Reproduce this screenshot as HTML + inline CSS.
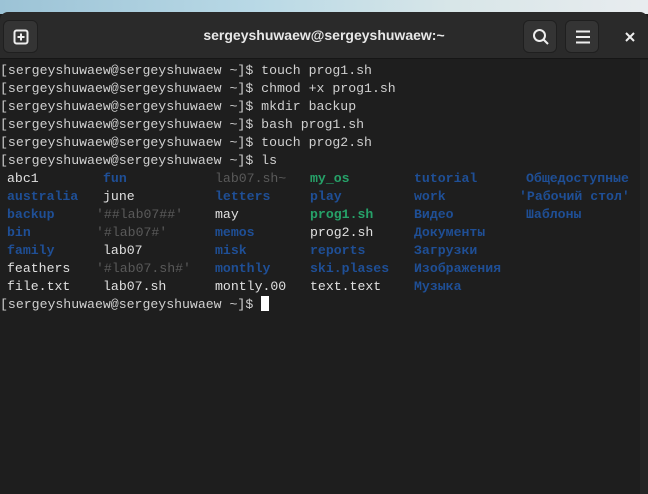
<!DOCTYPE html>
<html><head><meta charset="utf-8"><style>
*{margin:0;padding:0;box-sizing:border-box}
html,body{width:648px;height:494px;overflow:hidden}
body{background:#1e1e1e;position:relative;font-family:"Liberation Mono","DejaVu Sans Mono",monospace}
.desk{position:absolute;left:0;top:0;width:648px;height:14px;background:linear-gradient(90deg,#9cc3d6,#b9d9e6 40%,#d8e6e8 70%,#e8ecef)}
.hdr{position:absolute;left:0;top:12px;width:648px;height:47px;background:#2a2a2a;border-radius:8px 8px 0 0;border-bottom:1px solid #161616}
.btn{position:absolute;top:8px;height:33px;background:#343434;border-radius:6px;border:1px solid #1f1f1f}
.title{position:absolute;left:0;right:0;top:15px;text-align:center;color:#e8e8e8;font:bold 14px "Liberation Sans",sans-serif}
.term{position:absolute;left:0;top:62px;width:640px;color:#d0d0d0;font-size:13.2px;line-height:18px}
.sb{position:absolute;left:640px;top:60px;width:8px;height:434px;background:#262626}
.row{position:relative;height:18px;white-space:pre}
.row span{position:absolute;top:0}
.b{color:#1f4f96;font-weight:bold}.g{color:#26a269;font-weight:bold}.d{color:#5a5a5a}.w{color:#e0e0e0}
.cur{display:inline-block;width:8px;height:15px;background:#fff;vertical-align:-3px}
</style></head><body>
<div class="desk"></div>
<div class="hdr">
 <div class="btn" style="left:3px;width:35px"><svg width="35" height="33" viewBox="0 0 35 33"><rect x="10.5" y="9.5" width="13" height="13" rx="2" fill="none" stroke="#eee" stroke-width="2"/><path d="M17 12.5v7M13.5 16h7" stroke="#eee" stroke-width="2"/></svg></div>
 <div class="title">sergeyshuwaew@sergeyshuwaew:~</div>
 <div class="btn" style="left:523px;width:34px"><svg width="34" height="33" viewBox="0 0 34 33"><circle cx="15.5" cy="14.5" r="5.5" fill="none" stroke="#eee" stroke-width="2"/><path d="M19.5 18.5l4.5 4.5" stroke="#eee" stroke-width="2"/></svg></div>
 <div class="btn" style="left:565px;width:34px"><svg width="34" height="33" viewBox="0 0 34 33"><path d="M10 10.5h14M10 16h14M10 21.5h14" stroke="#eee" stroke-width="2"/></svg></div>
 <svg style="position:absolute;left:624px;top:19px" width="12" height="12" viewBox="0 0 12 12"><path d="M2 2l8 8M10 2l-8 8" stroke="#eee" stroke-width="2"/></svg>
</div>
<div class="term"><div class="row">[sergeyshuwaew@sergeyshuwaew ~]$ touch prog1.sh</div><div class="row">[sergeyshuwaew@sergeyshuwaew ~]$ chmod +x prog1.sh</div><div class="row">[sergeyshuwaew@sergeyshuwaew ~]$ mkdir backup</div><div class="row">[sergeyshuwaew@sergeyshuwaew ~]$ bash prog1.sh</div><div class="row">[sergeyshuwaew@sergeyshuwaew ~]$ touch prog2.sh</div><div class="row">[sergeyshuwaew@sergeyshuwaew ~]$ ls</div><div class="row"><span style="left:7px" class="w">abc1</span><span style="left:103px" class="b">fun</span><span style="left:215px" class="d">lab07.sh~</span><span style="left:310px" class="g">my_os</span><span style="left:414px" class="b">tutorial</span><span style="left:526px" class="b">Общедоступные</span></div><div class="row"><span style="left:7px" class="b">australia</span><span style="left:103px" class="w">june</span><span style="left:215px" class="b">letters</span><span style="left:310px" class="b">play</span><span style="left:414px" class="b">work</span><span style="left:519px" class="b">'Рабочий стол'</span></div><div class="row"><span style="left:7px" class="b">backup</span><span style="left:96px" class="d">'##lab07##'</span><span style="left:215px" class="w">may</span><span style="left:310px" class="g">prog1.sh</span><span style="left:414px" class="b">Видео</span><span style="left:526px" class="b">Шаблоны</span></div><div class="row"><span style="left:7px" class="b">bin</span><span style="left:96px" class="d">'#lab07#'</span><span style="left:215px" class="b">memos</span><span style="left:310px" class="w">prog2.sh</span><span style="left:414px" class="b">Документы</span></div><div class="row"><span style="left:7px" class="b">family</span><span style="left:103px" class="w">lab07</span><span style="left:215px" class="b">misk</span><span style="left:310px" class="b">reports</span><span style="left:414px" class="b">Загрузки</span></div><div class="row"><span style="left:7px" class="w">feathers</span><span style="left:96px" class="d">'#lab07.sh#'</span><span style="left:215px" class="b">monthly</span><span style="left:310px" class="b">ski.plases</span><span style="left:414px" class="b">Изображения</span></div><div class="row"><span style="left:7px" class="w">file.txt</span><span style="left:103px" class="w">lab07.sh</span><span style="left:215px" class="w">montly.00</span><span style="left:310px" class="w">text.text</span><span style="left:414px" class="b">Музыка</span></div><div class="row">[sergeyshuwaew@sergeyshuwaew ~]$ <span class="cur" style="position:static"></span></div></div>
<div class="sb"></div>
</body></html>
